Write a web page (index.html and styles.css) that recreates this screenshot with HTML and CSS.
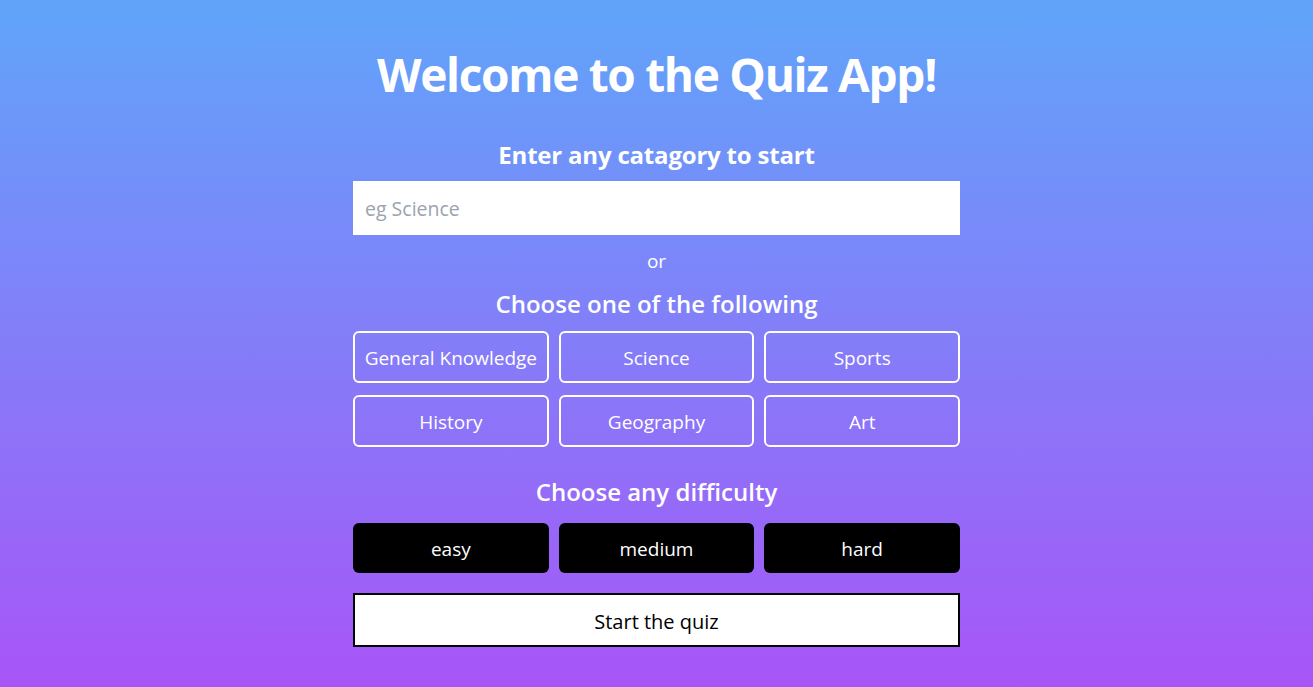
FILE: index.html
```html
<!DOCTYPE html>
<html lang="en">
<head>
<meta charset="utf-8">
<title>Quiz App</title>
<link rel="stylesheet" href="styles.css">
</head>
<body>
<main class="page">
  <div class="card">
    <h1 class="title">Welcome to the Quiz App!</h1>
    <h2 class="label">Enter any catagory to start</h2>
    <input class="search" type="text" placeholder="eg Science">
    <p class="or">or</p>
    <h3 class="sub">Choose one of the following</h3>
    <div class="grid">
      <button class="cat">General Knowledge</button>
      <button class="cat">Science</button>
      <button class="cat">Sports</button>
      <button class="cat">History</button>
      <button class="cat">Geography</button>
      <button class="cat">Art</button>
    </div>
    <h3 class="sub diff-title">Choose any difficulty</h3>
    <div class="diffs">
      <button class="diff">easy</button>
      <button class="diff">medium</button>
      <button class="diff">hard</button>
    </div>
    <button class="start">Start the quiz</button>
  </div>
</main>
</body>
</html>
```
FILE: styles.css
```css
html, body {
  margin: 0;
  padding: 0;
}
body {
  font-family: "Open Sans", "Noto Sans", sans-serif;
  color: #fff;
}
.page {
  min-height: 687px;
  background: linear-gradient(to bottom, #60a5fa, #a855f7);
  display: flex;
  justify-content: center;
}
.card {
  width: 607px;
  display: flex;
  flex-direction: column;
  align-items: stretch;
  text-align: center;
  padding-top: 50px;
}
.title {
  margin: 0;
  font-size: 46px;
  line-height: 48px;
  font-weight: 700;
  letter-spacing: -1.3px;
}
.label {
  margin: 41px 0 0;
  font-size: 24px;
  line-height: 32px;
  font-weight: 700;
  letter-spacing: -0.2px;
}
.search {
  margin-top: 10px;
  height: 54px;
  border: none;
  outline: none;
  padding: 0 12px;
  font-family: inherit;
  font-size: 19.5px;
  color: #333;
  background: #fff;
  box-sizing: border-box;
}
.search::placeholder {
  color: #9ca3af;
}
.or {
  margin: 12px 0 0;
  font-size: 19px;
  line-height: 28px;
}
.sub {
  margin: 13px 0 0;
  font-size: 24px;
  line-height: 32px;
  font-weight: 600;
}
.grid {
  margin-top: 11px;
  display: grid;
  grid-template-columns: repeat(3, 1fr);
  column-gap: 10px;
  row-gap: 12px;
}
.cat {
  height: 52px;
  border: 2px solid #fff;
  border-radius: 6px;
  background: transparent;
  color: #fff;
  font-family: inherit;
  font-size: 19px;
  padding: 2px 0 0;
}
.diff-title {
  margin-top: 29px;
}
.diffs {
  margin-top: 15px;
  display: grid;
  grid-template-columns: repeat(3, 1fr);
  column-gap: 10px;
}
.diff {
  height: 50px;
  border: none;
  border-radius: 6px;
  background: #000;
  color: #fff;
  font-family: inherit;
  font-size: 19px;
  padding: 2px 0 0;
}
.start {
  margin-top: 20px;
  height: 54px;
  border: 2px solid #000;
  background: #fff;
  color: #000;
  font-family: inherit;
  font-size: 20px;
  padding: 2px 0 0;
}
```
